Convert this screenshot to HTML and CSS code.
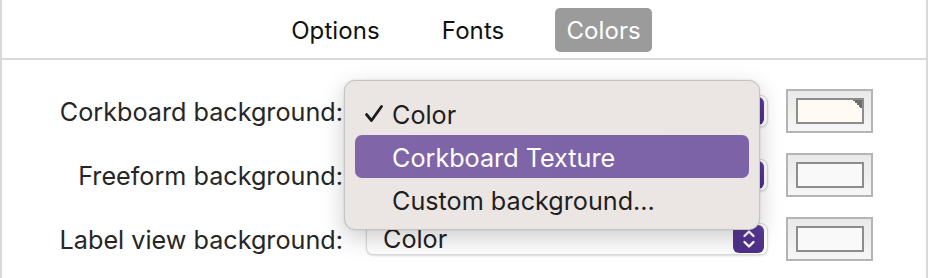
FILE: index.html
```html
<!DOCTYPE html>
<html lang="en">
<head>
  <meta charset="UTF-8" />
  <title>Preferences — Colors</title>
  <link rel="stylesheet" href="styles.css">
</head>
<body>
  <div class="window">
    <nav class="tabs">
      <span class="tab">Options</span>
      <span class="tab">Fonts</span>
      <span class="tab active">Colors</span>
    </nav>
    <div class="panel">
      <div class="row">
        <label>Corkboard background:</label>
        <div class="popup">
          <span>Color</span>
          <span class="stepper"><svg width="14" height="22" viewBox="0 0 14 22"><path d="M2.5 8 L7 3.5 L11.5 8 M2.5 14 L7 18.5 L11.5 14" fill="none" stroke="#fff" stroke-width="2.4" stroke-linecap="round" stroke-linejoin="round"/></svg></span>
        </div>
        <div class="well"><div class="swatch cream"></div></div>
      </div>
      <div class="row">
        <label>Freeform background:</label>
        <div class="popup">
          <span>Color</span>
          <span class="stepper"><svg width="14" height="22" viewBox="0 0 14 22"><path d="M2.5 8 L7 3.5 L11.5 8 M2.5 14 L7 18.5 L11.5 14" fill="none" stroke="#fff" stroke-width="2.4" stroke-linecap="round" stroke-linejoin="round"/></svg></span>
        </div>
        <div class="well"><div class="swatch"></div></div>
      </div>
      <div class="row">
        <label>Label view background:</label>
        <div class="popup">
          <span>Color</span>
          <span class="stepper"><svg width="14" height="22" viewBox="0 0 14 22"><path d="M2.5 8 L7 3.5 L11.5 8 M2.5 14 L7 18.5 L11.5 14" fill="none" stroke="#fff" stroke-width="2.4" stroke-linecap="round" stroke-linejoin="round"/></svg></span>
        </div>
        <div class="well"><div class="swatch"></div></div>
      </div>

      <!-- open menu of the first popup -->
      <ul class="menu">
        <li class="item checked"><svg class="check" width="20" height="20" viewBox="0 0 20 20"><path d="M2.5 10.5 L7.5 16.5 L17.5 2.5" fill="none" stroke="#1c1c1c" stroke-width="2.8" stroke-linecap="round" stroke-linejoin="round"/></svg>Color</li>
        <li class="item hover">Corkboard Texture</li>
        <li class="item">Custom background...</li>
      </ul>
    </div>
  </div>
</body>
</html>
```

FILE: styles.css
```css
body { margin: 0; background: #fff; font-family: Inter, "Noto Sans", "Liberation Sans", sans-serif; }
.window { width: 928px; height: 278px; box-sizing: border-box; border-left: 2px solid #d9d9d9; border-right: 2px solid #d9d9d9; overflow: hidden; }

.tabs { height: 60px; box-sizing: border-box; padding: 8px 0 8px 4px; display: flex; justify-content: center; gap: 40px; border-bottom: 2px solid #d9d9d9; }
.tab { height: 44px; padding: 0 11px; display: flex; align-items: center; font-size: 24px; letter-spacing: 0.1px; color: #111; border-radius: 5px; }
.tab.active { background: #9b9b9b; color: #fff; }

.panel { position: relative; padding-top: 19px; }
.row { height: 64px; display: grid; grid-template-columns: 341px 425px 105px; align-items: center; }
.row label { text-align: right; font-size: 25.2px; color: #262626; padding-top: 2px; }
.popup { margin-left: 23px; width: 402px; height: 32px; box-sizing: border-box; background: #fff; border: 1px solid #dcdcdc; border-radius: 7px; box-shadow: 0 1px 2px #0002; display: flex; align-items: center; justify-content: space-between; padding: 0 3px 0 16px; font-size: 25.2px; color: #222; }
.stepper { width: 31px; height: 28px; border-radius: 6px; background: linear-gradient(#5c3c99, #4d2f87); display: flex; align-items: center; justify-content: center; }

.well { margin-left: 18px; width: 87px; height: 44px; box-sizing: border-box; border: 2px solid #b4b4b4; background: linear-gradient(#e9e9e9, #f6f6f6); display: flex; align-items: center; justify-content: center; }
.swatch { position: relative; width: 68px; height: 26px; box-sizing: border-box; border: 2px solid #8d8d8d; background: #f9f9f9; }
.swatch.cream { background: #fffaf4; }
.swatch.cream::after { content: ""; position: absolute; top: 0; right: 0; width: 9px; height: 9px; background: linear-gradient(to bottom left, #6f6f6f 50%, transparent 50%); }

.menu { position: absolute; left: 342px; top: 20px; width: 416px; height: 150px; box-sizing: border-box; margin: 0; padding: 11px 10px; list-style: none; background: #ebe6e3; border: 1px solid #c6c2c0; border-radius: 11px; box-shadow: 0 8px 24px #0003, 0 0 2px #0002; }
.item { position: relative; height: 43px; display: flex; align-items: center; padding-left: 37px; padding-top: 2px; box-sizing: border-box; font-size: 25.2px; color: #1f1f1f; border-radius: 7px; }
.item.hover { background: linear-gradient(90deg, #8066a9, #7c62a6); color: #fff; }
.check { position: absolute; left: 9px; top: 12px; }
```
